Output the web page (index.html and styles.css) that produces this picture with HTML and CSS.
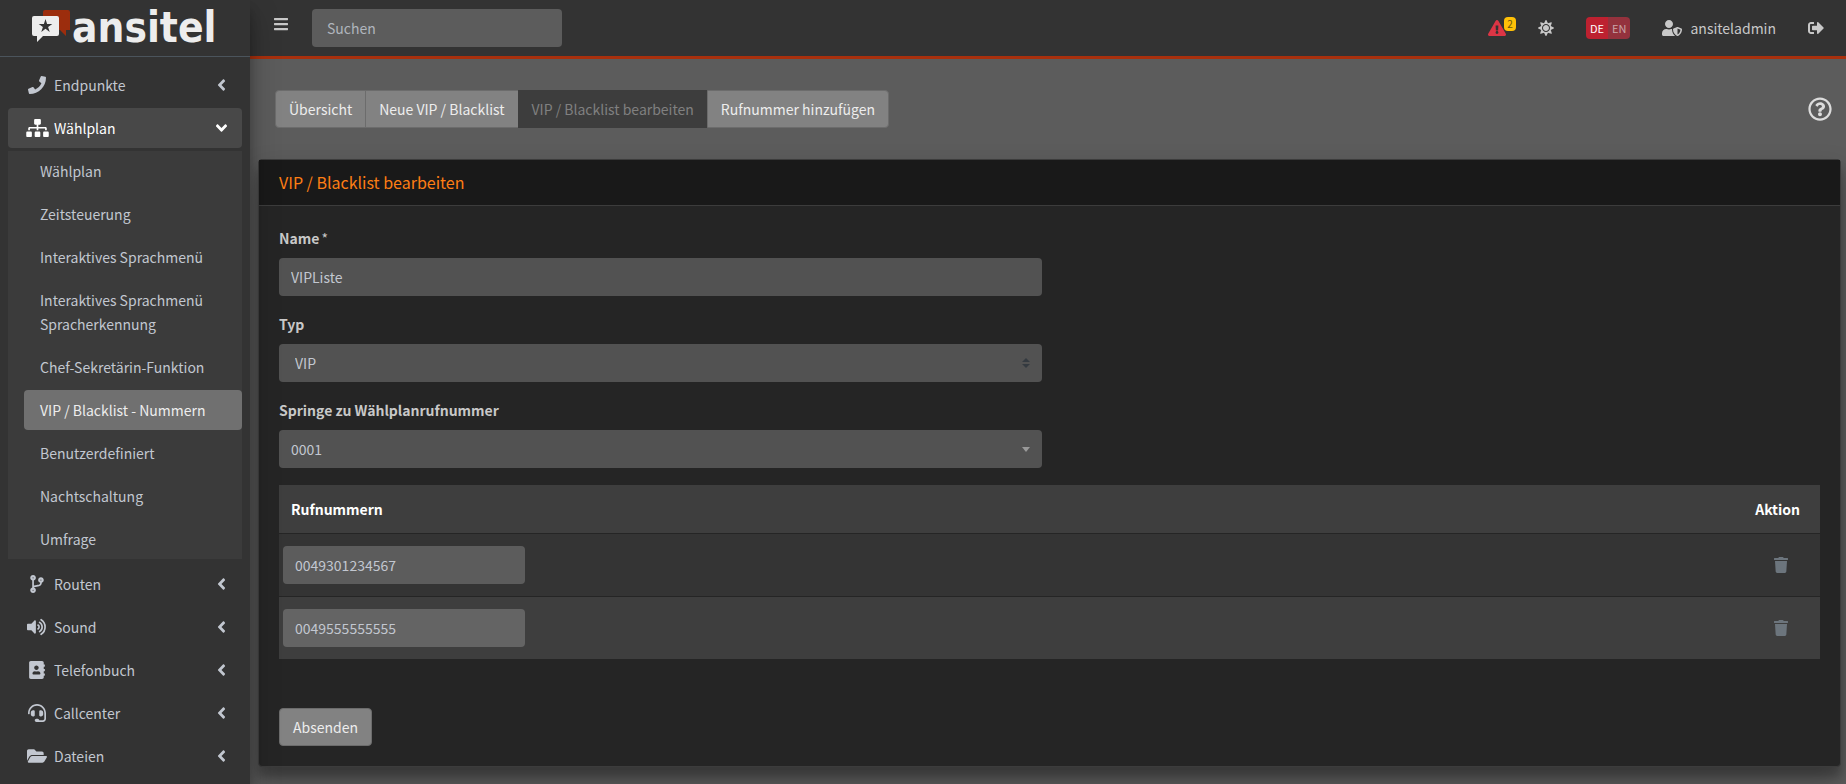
FILE: index.html
```html
<!DOCTYPE html>
<html lang="de">
<head>
    <meta charset="utf-8">
    <title>VIP / Blacklist bearbeiten</title>
    <link rel="stylesheet" href="styles.css">
</head>
<body>
<svg class="sprite" aria-hidden="true">
    <symbol id="angle-left" viewBox="0 0 256 512"><path d="M31.7 239l136-136c9.4-9.4 24.6-9.4 33.9 0l22.6 22.6c9.4 9.4 9.4 24.6 0 33.9L127.9 256l96.4 96.4c9.4 9.4 9.4 24.6 0 33.9L201.7 409c-9.4 9.4-24.6 9.4-33.9 0l-136-136c-9.5-9.4-9.5-24.6-.1-34z"/></symbol>
    <symbol id="trash" viewBox="0 0 448 512"><path d="M432 32H312l-9.4-18.7A24 24 0 0 0 281.1 0H166.8a23.72 23.72 0 0 0-21.4 13.3L136 32H16A16 16 0 0 0 0 48v32a16 16 0 0 0 16 16h416a16 16 0 0 0 16-16V48a16 16 0 0 0-16-16zM53.2 467a48 48 0 0 0 47.9 45h245.8a48 48 0 0 0 47.9-45L416 128H32z"/></symbol>
</svg>

<aside class="sidebar">
    <a href="#" class="brand">
        <svg class="brand-icon" width="39" height="34" viewBox="0 0 39 34">
            <path fill="#9c2d0d" d="M13 0h23q2 0 2 2v18h-4v6l-6-6h-3V6H11V2q0-2 2-2z"/>
            <path fill="#ededed" d="M2 6h23q2 0 2 2v16q0 2-2 2H11l-6 6v-6H2q-2 0-2-2V8q0-2 2-2z"/>
            <path fill="#333" d="M13.500 9l1.600 4.900h5.200l-4.200 3 1.600 5-4.200-3.100-4.200 3.100 1.600-5-4.200-3h5.200z"/>
        </svg>
        <span class="brand-text">ansitel</span>
    </a>
    <ul class="nav">
        <li><a href="#" class="nav-link">
            <span class="nav-icon"><svg width="18" height="18" viewBox="0 0 512 512"><path d="M493.4 24.6l-104-24c-11.3-2.6-22.9 3.3-27.5 13.9l-48 112c-4.200 9.800-1.400 21.300 6.900 28l60.600 49.600c-36 76.700-98.900 140.500-177.200 177.200l-49.600-60.600c-6.800-8.300-18.200-11.100-28-6.900l-112 48C3.900 366.500-2 378.100.6 389.400l24 104C27.100 504.200 36.700 512 48 512c256.100 0 464-207.500 464-464 0-11.200-7.700-20.900-18.600-23.400z"/></svg></span>
            Endpunkte
            <svg class="arrow" width="9" height="18"><use href="#angle-left"/></svg>
        </a></li>
        <li><a href="#" class="nav-link open">
            <span class="nav-icon"><svg width="23" height="18" viewBox="0 0 640 512"><path d="M128 352H32c-17.670 0-32 14.330-32 32v96c0 17.670 14.330 32 32 32h96c17.670 0 32-14.330 32-32v-96c0-17.670-14.330-32-32-32zm-24-80h192v48h48v-48h192v48h48v-57.590c0-21.170-17.230-38.410-38.410-38.410H344v-64h40c17.670 0 32-14.330 32-32V32c0-17.670-14.330-32-32-32H256c-17.670 0-32 14.330-32 32v96c0 17.670 14.330 32 32 32h40v64H94.410C73.230 224 56 241.230 56 262.410V320h48v-48zm264 80h-96c-17.670 0-32 14.330-32 32v96c0 17.670 14.330 32 32 32h96c17.670 0 32-14.330 32-32v-96c0-17.670-14.330-32-32-32zm240 0h-96c-17.670 0-32 14.330-32 32v96c0 17.670 14.330 32 32 32h96c17.670 0 32-14.330 32-32v-96c0-17.670-14.330-32-32-32z"/></svg></span>
            Wählplan
            <svg class="arrow" width="9" height="18"><use href="#angle-left"/></svg>
        </a>
            <ul class="subnav">
                <li><a href="#" class="sub-link">Wählplan</a></li>
                <li><a href="#" class="sub-link">Zeitsteuerung</a></li>
                <li><a href="#" class="sub-link">Interaktives Sprachmenü</a></li>
                <li><a href="#" class="sub-link">Interaktives Sprachmenü Spracherkennung</a></li>
                <li><a href="#" class="sub-link">Chef-Sekretärin-Funktion</a></li>
                <li><a href="#" class="sub-link active">VIP / Blacklist - Nummern</a></li>
                <li><a href="#" class="sub-link">Benutzerdefiniert</a></li>
                <li><a href="#" class="sub-link">Nachtschaltung</a></li>
                <li><a href="#" class="sub-link">Umfrage</a></li>
            </ul>
        </li>
        <li><a href="#" class="nav-link">
            <span class="nav-icon"><svg width="14" height="18" viewBox="0 0 384 512"><path d="M384 144c0-44.200-35.800-80-80-80s-80 35.800-80 80c0 36.400 24.300 67.100 57.500 76.800-.6 16.100-4.200 28.500-11 36.900-15.400 19.200-49.300 22.400-85.200 25.700-28.200 2.600-57.400 5.400-81.300 16.900v-144c32.500-10.200 56-40.500 56-76.300 0-44.200-35.800-80-80-80S0 35.800 0 80c0 35.800 23.500 66.100 56 76.300v199.300C23.500 365.900 0 396.200 0 432c0 44.200 35.800 80 80 80s80-35.800 80-80c0-34-21.200-63.100-51.200-74.600 3.100-5.200 7.800-9.800 14.900-13.400 16.200-8.200 40.400-10.400 66.100-12.800 42.200-3.900 90-8.400 118.200-43.400 14-17.400 21.100-39.800 21.600-67.900 31.600-10.800 54.400-40.700 54.400-75.900zM80 64c8.800 0 16 7.200 16 16s-7.200 16-16 16-16-7.200-16-16 7.200-16 16-16zm0 384c-8.800 0-16-7.200-16-16s7.200-16 16-16 16 7.200 16 16-7.200 16-16 16zm224-320c8.800 0 16 7.200 16 16s-7.200 16-16 16-16-7.200-16-16 7.200-16 16-16z"/></svg></span>
            Routen
            <svg class="arrow" width="9" height="18"><use href="#angle-left"/></svg>
        </a></li>
        <li><a href="#" class="nav-link">
            <span class="nav-icon"><svg width="20" height="18" viewBox="0 0 576 512"><path d="M215 71L126 160H24c-13.300 0-24 10.700-24 24v144c0 13.300 10.700 24 24 24h102l89 89c15 15 41 4.500 41-17V88c0-21.500-26-32-41-17z"/><g fill="none" stroke="currentColor" stroke-width="48" stroke-linecap="round"><path d="M316 200a64 64 0 0 1 0 112"/><path d="M362 122a158 158 0 0 1 0 268"/><path d="M406 46a250 250 0 0 1 0 420"/></g></svg></span>
            Sound
            <svg class="arrow" width="9" height="18"><use href="#angle-left"/></svg>
        </a></li>
        <li><a href="#" class="nav-link">
            <span class="nav-icon"><svg width="16" height="18" viewBox="0 0 448 512"><path d="M436 160c6.600 0 12-5.400 12-12v-40c0-6.600-5.400-12-12-12h-20V48c0-26.500-21.500-48-48-48H48C21.500 0 0 21.500 0 48v416c0 26.500 21.500 48 48 48h320c26.500 0 48-21.500 48-48v-48h20c6.600 0 12-5.400 12-12v-40c0-6.600-5.400-12-12-12h-20v-64h20c6.600 0 12-5.400 12-12v-40c0-6.600-5.400-12-12-12h-20v-64h20zm-228-32c35.300 0 64 28.700 64 64s-28.700 64-64 64-64-28.700-64-64 28.700-64 64-64zm112 236.800c0 10.600-10 19.200-22.400 19.200H118.400C106 384 96 375.400 96 364.800v-19.200c0-31.800 30.100-57.600 67.200-57.600h5c12.300 5.100 25.700 8 39.800 8s27.600-2.900 39.800-8h5c37.100 0 67.200 25.800 67.200 57.600v19.200z"/></svg></span>
            Telefonbuch
            <svg class="arrow" width="9" height="18"><use href="#angle-left"/></svg>
        </a></li>
        <li><a href="#" class="nav-link">
            <span class="nav-icon"><svg width="18" height="18" viewBox="0 0 512 512"><path d="M192 208c0-17.670-14.330-32-32-32h-16c-35.350 0-64 28.650-64 64v48c0 35.350 28.650 64 64 64h16c17.670 0 32-14.330 32-32V208zm176 144c35.350 0 64-28.650 64-64v-48c0-35.350-28.650-64-64-64h-16c-17.670 0-32 14.330-32 32v112c0 17.670 14.330 32 32 32h16zM256 0C113.180 0 4.580 118.830 0 256v16c0 8.840 7.160 16 16 16h16c8.840 0 16-7.160 16-16v-16c0-114.690 93.310-208 208-208s208 93.310 208 208h-.12c.08 2.430.12 165.720.12 165.720 0 23.350-18.930 42.280-42.280 42.280H320c0-26.510-21.490-48-48-48h-32c-26.510 0-48 21.490-48 48s21.490 48 48 48h181.720c49.860 0 90.280-40.420 90.280-90.280V256C507.420 118.830 398.820 0 256 0z"/></svg></span>
            Callcenter
            <svg class="arrow" width="9" height="18"><use href="#angle-left"/></svg>
        </a></li>
        <li><a href="#" class="nav-link">
            <span class="nav-icon"><svg width="20" height="18" viewBox="0 0 576 512"><path d="M572.694 292.093L500.270 416.248A63.997 63.997 0 0 1 444.989 448H45.025c-18.523 0-30.064-20.093-20.731-36.093l72.424-124.155A64 64 0 0 1 152 256h399.964c18.523 0 30.064 20.093 20.730 36.093zM152 224h328v-48c0-26.510-21.490-48-48-48H272l-64-64H48C21.490 64 0 85.490 0 112v278.046l69.077-118.418C86.214 242.250 117.989 224 152 224z"/></svg></span>
            Dateien
            <svg class="arrow" width="9" height="18"><use href="#angle-left"/></svg>
        </a></li>
    </ul>
</aside>

<div class="wrapper">
    <header class="topbar">
        <button type="button" class="menu-toggle" aria-label="Menü">
            <svg width="14" height="16" viewBox="0 0 448 512"><path d="M16 132h416c8.800 0 16-7.200 16-16V76c0-8.800-7.200-16-16-16H16C7.200 60 0 67.200 0 76v40c0 8.800 7.200 16 16 16zm0 160h416c8.800 0 16-7.200 16-16v-40c0-8.800-7.200-16-16-16H16c-8.800 0-16 7.200-16 16v40c0 8.800 7.200 16 16 16zm0 160h416c8.800 0 16-7.200 16-16v-40c0-8.800-7.200-16-16-16H16c-8.800 0-16 7.200-16 16v40c0 8.800 7.200 16 16 16z"/></svg>
        </button>
        <input type="text" class="search" placeholder="Suchen" aria-label="Suchen">
        <div class="topbar-right">
            <a href="#" class="alerts" aria-label="Warnungen">
                <svg width="18" height="16" viewBox="0 0 576 512"><path d="M569.517 440.013C587.975 472.007 564.806 512 527.940 512H48.054c-36.937 0-59.999-40.055-41.577-71.987L246.423 23.985c18.467-32.009 64.720-31.951 83.154 0l239.940 416.028zM288 354c-25.405 0-46 20.595-46 46s20.595 46 46 46 46-20.595 46-46-20.595-46-46-46zm-43.673-165.346l7.418 136c.347 6.364 5.609 11.346 11.982 11.346h48.546c6.373 0 11.635-4.982 11.982-11.346l7.418-136c.375-6.874-5.098-12.654-11.982-12.654h-63.383c-6.884 0-12.356 5.780-11.981 12.654z"/></svg>
                <span class="badge">2</span>
            </a>
            <a href="#" class="theme" aria-label="Farbschema">
                <svg width="16" height="16" viewBox="0 0 512 512"><path d="M256 160c-52.900 0-96 43.100-96 96s43.100 96 96 96 96-43.100 96-96-43.100-96-96-96zm246.400 80.500l-94.700-47.300 33.500-100.400c4.500-13.600-8.400-26.500-21.900-21.900l-100.400 33.500-47.400-94.800c-6.400-12.800-24.600-12.800-31 0l-47.300 94.700L92.700 70.800c-13.600-4.500-26.500 8.400-21.900 21.900l33.500 100.400-94.700 47.400c-12.800 6.400-12.800 24.600 0 31l94.700 47.300-33.500 100.500c-4.500 13.600 8.400 26.500 21.900 21.900l100.400-33.500 47.300 94.700c6.400 12.800 24.600 12.800 31 0l47.300-94.700 100.400 33.500c13.600 4.500 26.500-8.400 21.900-21.900l-33.500-100.400 94.700-47.300c13-6.500 13-24.700.2-31.100zm-155.900 106c-49.900 49.900-131.100 49.900-181 0-49.900-49.900-49.900-131.100 0-181 49.900-49.900 131.100-49.900 181 0 49.900 49.900 49.900 131.100 0 181z"/></svg>
            </a>
            <div class="lang">
                <button type="button" class="lang-btn current">DE</button>
                <button type="button" class="lang-btn">EN</button>
            </div>
            <a href="#" class="user">
                <svg width="20" height="16" viewBox="0 0 640 512"><path d="M622.300 271.100l-115.200-45c-4.100-1.600-12.600-3.700-22.200 0l-115.200 45c-10.700 4.200-17.700 14-17.700 24.900 0 111.600 68.700 188.800 132.900 213.900 9.600 3.700 18 1.600 22.200 0C558.400 489.900 640 420.500 640 296c0-10.900-7-20.700-17.700-24.900zM496 462.400V273.300l95.500 37.300c-5.600 87.100-60.900 135.400-95.500 151.800zM224 256c70.700 0 128-57.300 128-128S294.700 0 224 0 96 57.300 96 128s57.300 128 128 128zm96 40c0-2.500.8-4.800 1.100-7.200-2.500-.1-4.900-.8-7.500-.8h-16.700c-22.200 10.200-46.900 16-72.900 16s-50.600-5.800-72.900-16h-16.700C60.200 288 0 348.200 0 422.400V464c0 26.500 21.500 48 48 48h352c6.800 0 13.300-1.500 19.200-4-54-42.900-99.200-116.700-99.200-212z"/></svg>
                ansiteladmin
            </a>
            <a href="#" class="logout" aria-label="Abmelden">
                <svg width="16" height="16" viewBox="0 0 512 512"><path d="M497 273L329 441c-15 15-41 4.500-41-17v-96H152c-13.300 0-24-10.700-24-24v-96c0-13.300 10.700-24 24-24h136V88c0-21.400 25.900-32 41-17l168 168c9.300 9.400 9.300 24.600 0 34zM192 436v-40c0-6.600-5.400-12-12-12H96c-17.700 0-32-14.300-32-32V160c0-17.700 14.300-32 32-32h84c6.600 0 12-5.400 12-12V76c0-6.600-5.400-12-12-12H96c-53 0-96 43-96 96v192c0 53 43 96 96 96h84c6.600 0 12-5.400 12-12z"/></svg>
            </a>
        </div>
    </header>

    <main class="content">
        <div class="toolbar">
            <div class="btn-group">
                <button type="button" class="btn">Übersicht</button>
                <button type="button" class="btn">Neue VIP / Blacklist</button>
                <button type="button" class="btn" disabled>VIP / Blacklist bearbeiten</button>
                <button type="button" class="btn">Rufnummer hinzufügen</button>
            </div>
            <a href="#" class="help" aria-label="Hilfe">
                <svg width="24" height="24" viewBox="0 0 512 512"><path d="M256 8C119.043 8 8 119.083 8 256c0 136.997 111.043 248 248 248s248-111.003 248-248C504 119.083 392.957 8 256 8zm0 448c-110.532 0-200-89.431-200-200 0-110.495 89.472-200 200-200 110.491 0 200 89.471 200 200 0 110.530-89.431 200-200 200zm107.244-255.200c0 67.052-72.421 68.084-72.421 92.863V300c0 6.627-5.373 12-12 12h-45.647c-6.627 0-12-5.373-12-12v-8.659c0-35.745 27.100-50.034 47.579-61.516 17.561-9.845 28.324-16.541 28.324-29.579 0-17.246-21.999-28.693-39.784-28.693-23.189 0-33.894 10.977-48.942 29.969-4.057 5.120-11.460 6.071-16.666 2.124l-27.824-21.098c-5.107-3.872-6.251-11.066-2.644-16.363C184.846 131.491 214.940 112 261.794 112c49.071 0 101.450 38.304 101.450 88.800zM298 368c0 23.159-18.841 42-42 42s-42-18.841-42-42 18.841-42 42-42 42 18.841 42 42z"/></svg>
            </a>
        </div>

        <section class="card">
            <h1 class="card-header">VIP / Blacklist bearbeiten</h1>
            <form class="card-body">
                <div class="form-group">
                    <label for="name">Name<span class="required">*</span></label>
                    <input type="text" id="name" class="form-control" value="VIPListe">
                </div>
                <div class="form-group">
                    <label for="type">Typ</label>
                    <select id="type" class="form-control type-select">
                        <option>VIP</option>
                        <option>Blacklist</option>
                    </select>
                </div>
                <div class="form-group">
                    <label for="jump">Springe zu Wählplanrufnummer</label>
                    <select id="jump" class="form-control jump-select">
                        <option>0001</option>
                    </select>
                </div>
                <table class="numbers">
                    <thead>
                    <tr>
                        <th>Rufnummern</th>
                        <th class="action">Aktion</th>
                    </tr>
                    </thead>
                    <tbody>
                    <tr>
                        <td><input type="text" class="form-control number" value="0049301234567" aria-label="Rufnummer 1"></td>
                        <td class="action"><button type="button" class="delete" aria-label="Löschen"><svg width="14" height="16"><use href="#trash"/></svg></button></td>
                    </tr>
                    <tr>
                        <td><input type="text" class="form-control number" value="0049555555555" aria-label="Rufnummer 2"></td>
                        <td class="action"><button type="button" class="delete" aria-label="Löschen"><svg width="14" height="16"><use href="#trash"/></svg></button></td>
                    </tr>
                    </tbody>
                </table>
                <button type="button" class="btn submit">Absenden</button>
            </form>
        </section>
    </main>
</div>
</body>
</html>
```
FILE: styles.css
```css
* {
    box-sizing: border-box;
}

body {
    display: flex;
    min-height: 100vh;
    margin: 0;
    background-color: #5c5c5c;
    color: #c8c8c8;
    font-family: "Noto Sans CJK SC", sans-serif;
    font-size: 14px;
    line-height: 24px;
}

a {
    color: inherit;
    text-decoration: none;
}

svg {
    display: block;
    fill: currentColor;
}

button, input, select {
    font: inherit;
    margin: 0;
}

button {
    cursor: pointer;
}

.sprite {
    display: none;
}

/* sidebar */
.sidebar {
    position: relative;
    z-index: 2;
    flex: 0 0 250px;
    background-color: #333;
    color: #c2c7d0;
    box-shadow: 0 14px 28px rgba(0, 0, 0, .25), 0 10px 10px rgba(0, 0, 0, .22);
}

.brand {
    display: flex;
    height: 57px;
    padding: 10px 0 0 32px;
    border-bottom: 1px solid #4b545c;
}

.brand-text {
    margin-left: 1px;
    color: #ededed;
    font-family: "DejaVu Sans Condensed", "DejaVu Sans", sans-serif;
    font-size: 42px;
    font-weight: bold;
    line-height: 36px;
}

.nav, .subnav {
    display: flex;
    flex-direction: column;
    gap: 3px;
    margin: 0;
    padding: 0;
    list-style: none;
}

.nav {
    padding: 8px 8px 0;
}

.nav-link {
    display: flex;
    align-items: center;
    padding: 8px 16px;
    border-radius: 4px;
}

.nav-link.open {
    background-color: #484848;
    color: #fff;
}

.nav-icon {
    display: flex;
    justify-content: center;
    width: 26px;
    margin-right: 4px;
}

.arrow {
    margin-left: auto;
}

.open .arrow {
    transform: rotate(-90deg);
}

.subnav {
    margin: 3px 0 2px;
    background-color: #3b3b3b;
}

.sub-link {
    display: block;
    margin-left: 16px;
    padding: 8px 16px;
    border-radius: 4px;
}

.sub-link.active {
    background-color: #707070;
    color: #ededed;
}

/* top bar */
.wrapper {
    flex: 1;
    min-width: 0;
}

.topbar {
    display: flex;
    align-items: center;
    height: 59px;
    padding: 0 22px 0 24px;
    background-color: #333;
    border-bottom: 3px solid #a8300d;
}

.menu-toggle {
    margin: 0 24px 8px 0;
    padding: 0;
    border: 0;
    background: none;
    color: #c8c8c8;
}

.search {
    width: 250px;
    height: 38px;
    padding: 6px 15px;
    border: 0;
    border-radius: 4px;
    background-color: #5c5c5c;
    color: #c2c7d0;
}

.search::placeholder {
    color: #b0b5bd;
}

.topbar-right {
    display: flex;
    align-items: center;
    gap: 32px;
    margin-left: auto;
}

.alerts {
    position: relative;
    color: #dc3545;
}

.badge {
    position: absolute;
    top: -3px;
    left: 16px;
    width: 12px;
    border-radius: 4px;
    background-color: #ffc107;
    color: #6b5510;
    font-size: 10px;
    line-height: 14px;
    text-align: center;
}

.lang {
    display: flex;
    overflow: hidden;
    border-radius: 4px;
}

.lang-btn {
    padding: 0 4px;
    border: 0;
    background-color: #94323d;
    color: #c9a5a9;
    font-size: 11px;
    line-height: 22px;
}

.lang-btn.current {
    background-color: #bd2130;
    color: #fff;
}

.user {
    display: flex;
    align-items: center;
    gap: 8px;
}

/* content */
.content {
    padding: 31px 5px 17px 8px;
}

.toolbar {
    display: flex;
    align-items: center;
    justify-content: space-between;
    padding: 0 9px 0 17px;
}

.btn-group {
    display: flex;
}

.btn {
    height: 38px;
    padding: 0 13px;
    border: 1px solid #6c6c6c;
    border-radius: 4px;
    background-color: #828282;
    color: #ededed;
}

.btn:disabled {
    border-color: #3d3d3d;
    background-color: #3d3d3d;
    color: #808080;
}

.btn-group .btn {
    border-radius: 0;
}

.btn-group .btn + .btn {
    margin-left: -1px;
}

.btn-group .btn:first-child {
    border-radius: 4px 0 0 4px;
}

.btn-group .btn:last-child {
    border-radius: 0 4px 4px 0;
}

.help {
    color: #dcdcdc;
}

.card {
    margin-top: 31px;
    border: 1px solid #3c3c3c;
    border-radius: 4px;
    background-color: #252525;
    box-shadow: 0 14px 28px rgba(0, 0, 0, .25), 0 10px 10px rgba(0, 0, 0, .22);
}

.card-header {
    margin: 0;
    padding: 12px 20px;
    border-bottom: 1px solid #3c3c3c;
    background-color: #191919;
    color: #fd7e14;
    font-size: 16px;
    font-weight: normal;
    line-height: 21px;
}

.card-body {
    padding: 20px;
}

.form-group {
    width: calc(50% - 8px);
    margin-bottom: 16px;
}

.form-group label {
    display: block;
    margin-bottom: 8px;
    font-weight: bold;
}

.required {
    margin-left: 2px;
    font-weight: normal;
}

.form-control {
    display: block;
    width: 100%;
    height: 38px;
    padding: 6px 12px;
    border: 0;
    border-radius: 4px;
    background-color: #525252;
    color: #c2c7d0;
    appearance: none;
}

.type-select {
    padding-left: 16px;
    background-image: url("data:image/svg+xml,%3csvg xmlns='http://www.w3.org/2000/svg' viewBox='0 0 4 5'%3e%3cpath fill='%23343a40' d='M2 0L0 2h4zm0 5L0 3h4z'/%3e%3c/svg%3e");
    background-repeat: no-repeat;
    background-position: right 12px center;
    background-size: 8px 10px;
}

.jump-select {
    background-image: url("data:image/svg+xml,%3csvg xmlns='http://www.w3.org/2000/svg' viewBox='0 0 8 5'%3e%3cpath fill='%23999' d='M0 0h8L4 5z'/%3e%3c/svg%3e");
    background-repeat: no-repeat;
    background-position: right 12px center;
    background-size: 8px 5px;
}

.numbers {
    width: 100%;
    margin-bottom: 49px;
    border-spacing: 0;
}

.numbers th, .numbers td {
    padding: 12px 4px;
    border-top: 1px solid #252525;
    text-align: left;
}

.numbers th {
    padding: 12px;
    color: #fff;
}

.numbers tr {
    background-color: #3e3e3e;
}

.numbers tbody tr:nth-child(odd) {
    background-color: #343434;
}

.numbers .action {
    width: 100px;
    padding-right: 20px;
    text-align: right;
}

.numbers td.action {
    padding-right: 32px;
}

.number {
    width: 242px;
    background-color: rgba(255, 255, 255, .2);
}

.delete {
    display: block;
    margin-left: auto;
    padding: 0;
    border: 0;
    background: none;
    color: #6c757d;
}
```
